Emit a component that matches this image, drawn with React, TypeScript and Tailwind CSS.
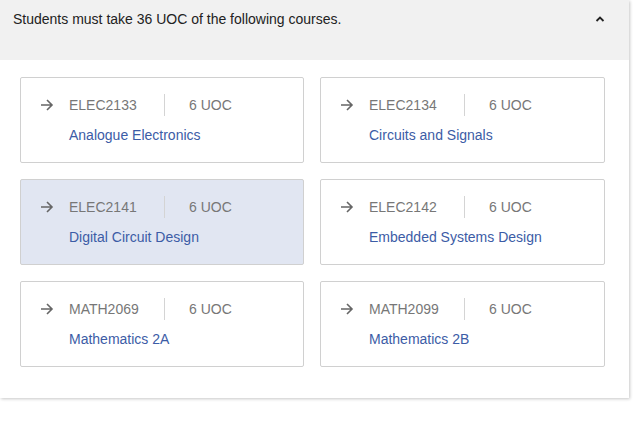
import React from 'react'

const courses = [
  { code: 'ELEC2133', title: 'Analogue Electronics' },
  { code: 'ELEC2134', title: 'Circuits and Signals' },
  { code: 'ELEC2141', title: 'Digital Circuit Design', selected: true },
  { code: 'ELEC2142', title: 'Embedded Systems Design' },
  { code: 'MATH2069', title: 'Mathematics 2A' },
  { code: 'MATH2099', title: 'Mathematics 2B' },
]

const Arrow = () => (
  <svg width="14" height="14" viewBox="0 0 14 14" fill="none" stroke="#666" strokeWidth="1.6">
    <path d="M1 7h11M7 2l5 5-5 5" />
  </svg>
)

const CourseCard = ({ code, title, selected }: { code: string; title: string; selected?: boolean }) => (
  <div
    className={`h-[86px] border border-[#d0d0d0] rounded-[2px] pl-[19px] pt-[16px] ${selected ? 'bg-[#e1e6f2]' : 'bg-white'}`}
  >
    <div className="flex items-center h-[22px]">
      <div className="w-[29px] flex items-center"><Arrow /></div>
      <span className="w-[95px] text-[14px] text-[#777]">{code}</span>
      <div className="w-px h-[22px] bg-[#d4d4d4]" />
      <span className="ml-[24px] text-[14px] text-[#777]">6 UOC</span>
    </div>
    <div className="ml-[29px] mt-[9px] text-[14px] text-[#3c5ca6]">{title}</div>
  </div>
)

export default function App() {
  return (
    <div className="bg-white h-screen" style={{ fontFamily: '"Liberation Sans", Arial, sans-serif' }}>
      <div className="w-[629px] bg-white shadow-[1px_1px_3px_rgba(0,0,0,0.22)] pb-[31px]">
        <div className="h-[60px] bg-[#f1f1f1] flex items-start justify-between pl-[13px] pr-[23px] pt-[9px]">
          <span className="text-[14px] text-[#222]">Students must take 36 UOC of the following courses.</span>
          <svg width="12" height="12" viewBox="0 0 12 12" fill="none" stroke="#222" strokeWidth="1.8" className="mt-[4px]">
            <path d="M2.5 8l3.5-3.5 3.5 3.5" />
          </svg>
        </div>
        <div className="grid grid-cols-[284px_285px] gap-[16px] pl-[20px] pt-[17px]">
          {courses.map((c) => (
            <CourseCard key={c.code} {...c} />
          ))}
        </div>
      </div>
    </div>
  )
}
